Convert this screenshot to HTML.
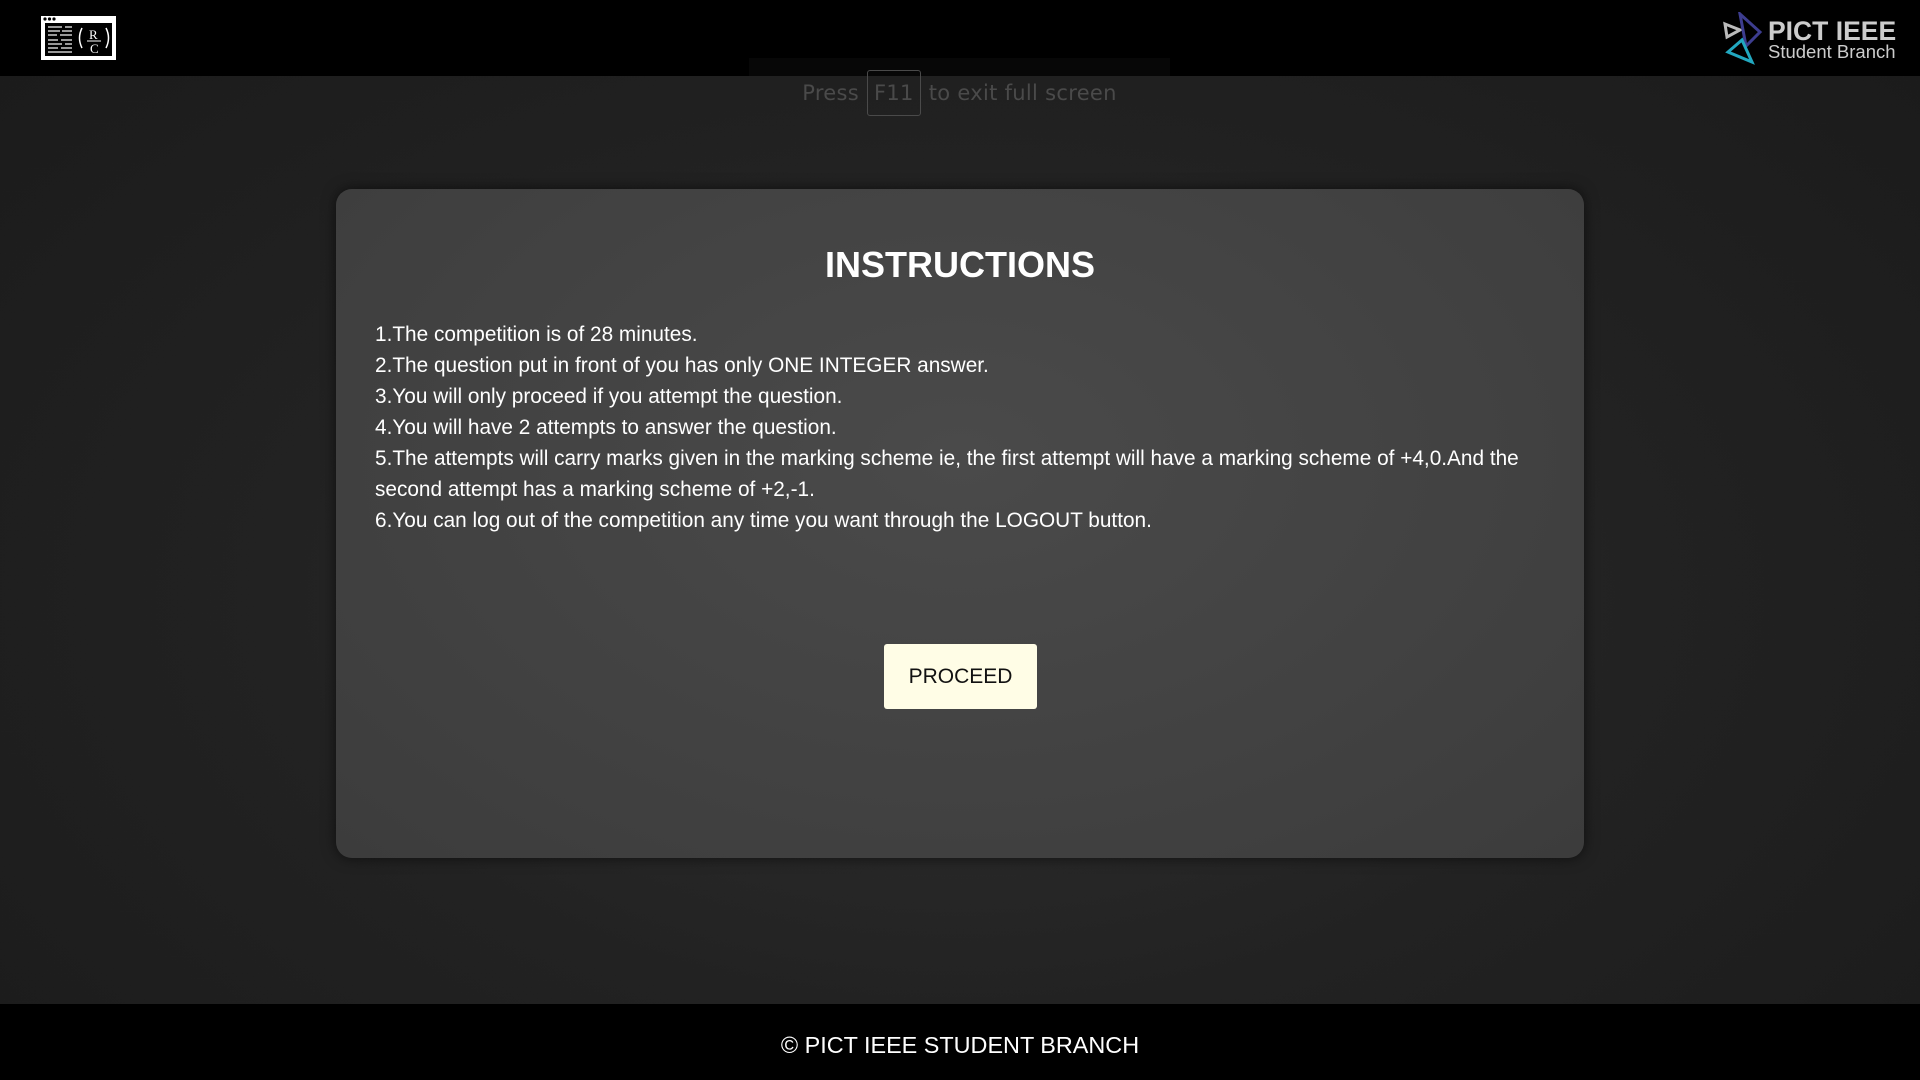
<!DOCTYPE html>
<html><head><meta charset="utf-8"><style>
html,body{margin:0;width:1920px;height:1080px;overflow:hidden;font-family:"Liberation Sans",sans-serif}
body{background:radial-gradient(ellipse at 50% 55%,#303030 0%,#222 50%,#1a1a1a 100%);position:relative}
.hdr{position:absolute;left:0;top:0;width:1920px;height:76px;background:#000}
.ftr{position:absolute;left:0;top:1004px;width:1920px;height:76px;background:#000;color:#fff;font-size:23.4px;text-align:center;line-height:82px}
.f11{position:absolute;left:749px;top:58px;width:421px;height:52px;color:#4a4a4a;font-family:"DejaVu Sans",sans-serif;font-size:21px;text-align:center;line-height:70px;letter-spacing:.3px}
.f11 span{display:inline-block;border:1px solid #4a4a4a;border-radius:3px;padding:0 6px;line-height:44px;margin:0 8px}
.f11bg{position:absolute;left:749px;top:58px;width:421px;height:18px;background:#070707}
.card{position:absolute;left:336px;top:189px;width:1248px;height:669px;border-radius:16px;background:radial-gradient(ellipse at 50% 40%,#4a4a4a,#3c3c3c);box-shadow:0 0 14px rgba(0,0,0,.6)}
h1{margin:0;position:absolute;top:55px;width:100%;text-align:center;color:#fff;font-size:36px;font-weight:bold}
.txt{position:absolute;left:39px;top:130px;right:40px;color:#fff;font-size:20.8px;line-height:31px}
.btn{position:absolute;left:548px;top:455px;width:153px;height:65px;background:#fffde6;border-radius:3px;color:#111;font-size:21px;text-align:center;line-height:65px}
</style></head><body>
<div class="hdr">
<svg style="position:absolute;left:40px;top:15px" width="77" height="46" viewBox="0 0 77 46">
<rect x="1" y="1" width="75" height="44" fill="#fff"/>
<circle cx="5" cy="4" r="1.6" fill="#000"/><circle cx="9.5" cy="4" r="1.6" fill="#000"/><circle cx="14" cy="4" r="1.6" fill="#000"/>
<rect x="5" y="8" width="67" height="33" fill="#000"/>
<g stroke="#ccc" stroke-width="1.5"><path d="M8 12h14M25 12h7M8 16h12M22 16h10M8 20h9M20 20h12M8 25h10M21 25h11M8 29h14M25 29h7M8 33h10M21 33h11M8 37h24"/></g>
<path d="M42 13q-5 10 0 20M66 13q5 10 0 20" stroke="#fff" stroke-width="1.5" fill="none"/>
<text x="49" y="24" fill="#fff" font-family="Liberation Serif" font-size="13">R</text>
<path d="M47 26h14" stroke="#fff"/>
<text x="50" y="38" fill="#fff" font-family="Liberation Serif" font-size="13">C</text>
</svg>
<svg style="position:absolute;left:1722px;top:12px" width="42" height="54" viewBox="0 0 42 54">
<path d="M3 12 L18 18 L5 25 Z" stroke="#bbb" stroke-width="3" fill="none"/>
<path d="M18 2 L38 20 L24 34 Z" stroke="#3d3d8f" stroke-width="3" fill="none"/>
<path d="M20 28 L30 50 L6 40 Z" stroke="#22a8c0" stroke-width="3" fill="none"/>
</svg>
<div style="position:absolute;left:1768px;top:16px;color:#ccc;font-weight:bold;font-size:26.5px;line-height:30px">PICT IEEE</div>
<div style="position:absolute;left:1768px;top:42px;color:#ccc;font-size:18.5px;line-height:20px">Student Branch</div>
</div>
<div class="f11bg"></div>
<div class="f11">Press<span>F11</span>to exit full screen</div>
<div class="card">
<h1>INSTRUCTIONS</h1>
<div class="txt">1.The competition is of 28 minutes.<br>2.The question put in front of you has only ONE INTEGER answer.<br>3.You will only proceed if you attempt the question.<br>4.You will have 2 attempts to answer the question.<br>5.The attempts will carry marks given in the marking scheme ie, the first attempt will have a marking scheme of +4,0.And the second attempt has a marking scheme of +2,-1.<br>6.You can log out of the competition any time you want through the LOGOUT button.</div>
<div class="btn">PROCEED</div>
</div>
<div class="ftr">© PICT IEEE STUDENT BRANCH</div>
</body></html>
